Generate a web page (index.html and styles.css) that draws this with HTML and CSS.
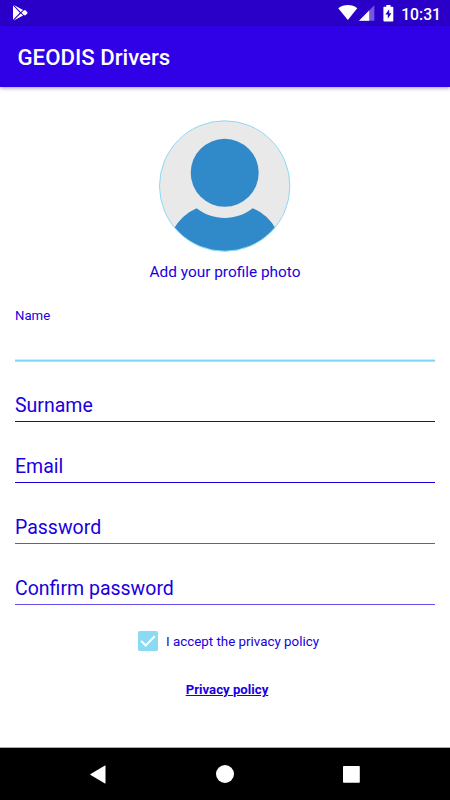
FILE: index.html
```html
<!DOCTYPE html>
<html lang="en">
<head>
    <meta charset="UTF-8">
    <meta name="viewport" content="width=device-width, initial-scale=1.0">
    <title>GEODIS Drivers</title>
    <link rel="stylesheet" href="styles.css">
</head>
<body>
    <div class="status-bar">
        <svg class="play-icon" width="15" height="16" viewBox="0 0 15 16">
            <path fill="#fff" d="M0 .5v14.300l6.800-7.100zM.8 0l6.900 6.900 2.400-2zM.8 15.600l6.900-7.100 2.400 2.100zM8.500 7.700l2.500-2.400h1.500L14.500 7.400v.8L12.500 10.200H11z"/>
        </svg>
        <div class="status-icons">
            <svg width="38" height="16" viewBox="0 0 38 16">
                <path fill="#fff" d="M.3 3.300C5.700-1 14.100-1 19.300 3.300L9.800 15z"/>
                <path fill="#7458e0" d="M36.300.3v15.400H21z"/>
                <path fill="#fff" d="M31.200 5.600v10.100H21z"/>
            </svg>
            <svg class="battery" width="11" height="17" viewBox="0 0 11 17">
                <path fill="#fff" d="M3.300 0h4.200v1.700h2q.8 0 .8.900v12.900q0 .9-.9.900H1.300q-.9 0-.9-.9V2.600q0-.9.800-.9h2.100z"/>
                <path fill="#2a00c9" d="M6.200 4.200 2.400 9.600h2.400v4.200l3.600-5.600H6.200z"/>
            </svg>
            <span class="time">10:31</span>
        </div>
    </div>

    <header>
        <h1>GEODIS Drivers</h1>
    </header>

    <main>
        <div class="profile">
            <svg width="132" height="132" viewBox="0 0 132 132">
                <defs>
                    <clipPath id="avatar"><circle cx="65.700" cy="66" r="65.200"/></clipPath>
                </defs>
                <g clip-path="url(#avatar)">
                    <rect width="132" height="132" fill="#e9e9e9"/>
                    <circle cx="65.700" cy="52.800" r="34" fill="#3089c8"/>
                    <path fill="#3089c8" d="M14 110Q23 94.500 37.600 88.300C54 101.200 77.300 101.200 93.700 88.300Q108.500 94 117.500 110V132H14z"/>
                </g>
                <circle cx="65.700" cy="66" r="65.200" fill="none" stroke="#8bdaf4" stroke-width="1"/>
            </svg>
            <p>Add your profile photo</p>
        </div>

        <form>
            <div class="field active"><label>Name</label></div>
            <div class="field dark"><label>Surname</label></div>
            <div class="field"><label>Email</label></div>
            <div class="field soft"><label>Password</label></div>
            <div class="field soft"><label>Confirm password</label></div>

            <div class="accept">
                <svg width="20" height="20" viewBox="0 0 20 20">
                    <rect width="20" height="20" rx="1.800" fill="#8bdaf4"/>
                    <path d="M3.200 10 7.700 14.500 16.700 5.300" fill="none" stroke="#fff" stroke-width="2"/>
                </svg>
                <span>I accept the privacy policy</span>
            </div>
            <a class="policy">Privacy policy</a>
        </form>
    </main>

    <nav>
        <svg width="16" height="19" viewBox="0 0 16 19">
            <path fill="#fff" d="M15.500.8v17.400q0 .5-.5.300L.6 10q-.7-.5 0-1L15 .5q.5-.2.500.3z"/>
        </svg>
        <svg width="18" height="18" viewBox="0 0 18 18">
            <circle cx="9" cy="9" r="9" fill="#fff"/>
        </svg>
        <svg width="17" height="17" viewBox="0 0 17 17">
            <rect width="16.800" height="16.800" rx=".8" fill="#fff"/>
        </svg>
    </nav>
</body>
</html>
```
FILE: styles.css
```css
* {
    box-sizing: border-box;
}
body {
    font-family: Roboto, sans-serif;
    background-color: #fff;
    color: #1a00e0;
    margin: 0;
    height: 800px;
    display: flex;
    flex-direction: column;
    overflow: hidden;
}
svg {
    display: block;
    flex: none;
}
.status-bar {
    height: 26px;
    flex: none;
    background-color: #2a00c9;
    color: #fff;
    display: flex;
    justify-content: space-between;
    padding: 5px 9px 0 13px;
}
.status-icons {
    display: flex;
}
.battery {
    margin-left: 7px;
}
.time {
    font-size: 15.7px;
    font-weight: 500;
    line-height: 19px;
    margin-left: 7px;
}
header {
    height: 61px;
    flex: none;
    background-color: #3000e6;
    color: #fff;
    padding-left: 17.5px;
    box-shadow: 0 1px 4px rgba(0, 0, 0, 0.4);
}
h1 {
    margin: 0;
    font-size: 22.2px;
    font-weight: 500;
    line-height: 63px;
}
main {
    flex: 1;
    padding: 33px 15px 0;
}
.profile {
    display: flex;
    flex-direction: column;
    align-items: center;
}
.profile p {
    margin: 9px 0 0;
    font-size: 15.4px;
    line-height: 22px;
}
form {
    display: flex;
    flex-direction: column;
    align-items: center;
}
.field {
    width: 100%;
    height: 61px;
    padding-top: 32px;
    border-bottom: 1px solid #1a00e0;
}
.field label {
    display: block;
    font-size: 19.5px;
    line-height: 26px;
}
/* Focused field, label floats above the line */
.field.active {
    height: 79px;
    padding-top: 24px;
    border-bottom: 0;
    background: linear-gradient(#c9edf9 1px, #7dd7f5 1px, #7dd7f5 2px, #a8e4f8 2px) bottom / 100% 3px no-repeat;
}
.field.active label {
    font-size: 13.2px;
    line-height: 18px;
}
.field.dark {
    height: 60px;
    padding-top: 31px;
    border-bottom-color: #2a00c0;
}
.field.soft {
    border-bottom-color: #6450e8;
}
.accept {
    display: flex;
    align-items: center;
    gap: 8px;
    margin-top: 26px;
    margin-left: 7px;
    font-size: 13.35px;
}
.policy {
    margin-top: 30px;
    margin-left: 4px;
    font-size: 13.2px;
    font-weight: 700;
    line-height: 18px;
    text-decoration: underline;
    text-decoration-thickness: 1px;
}
nav {
    height: 53px;
    flex: none;
    background-color: #000;
    border-top: 1px solid #aaa;
    display: flex;
    align-items: center;
    justify-content: space-between;
    padding: 0 90px;
}
```
